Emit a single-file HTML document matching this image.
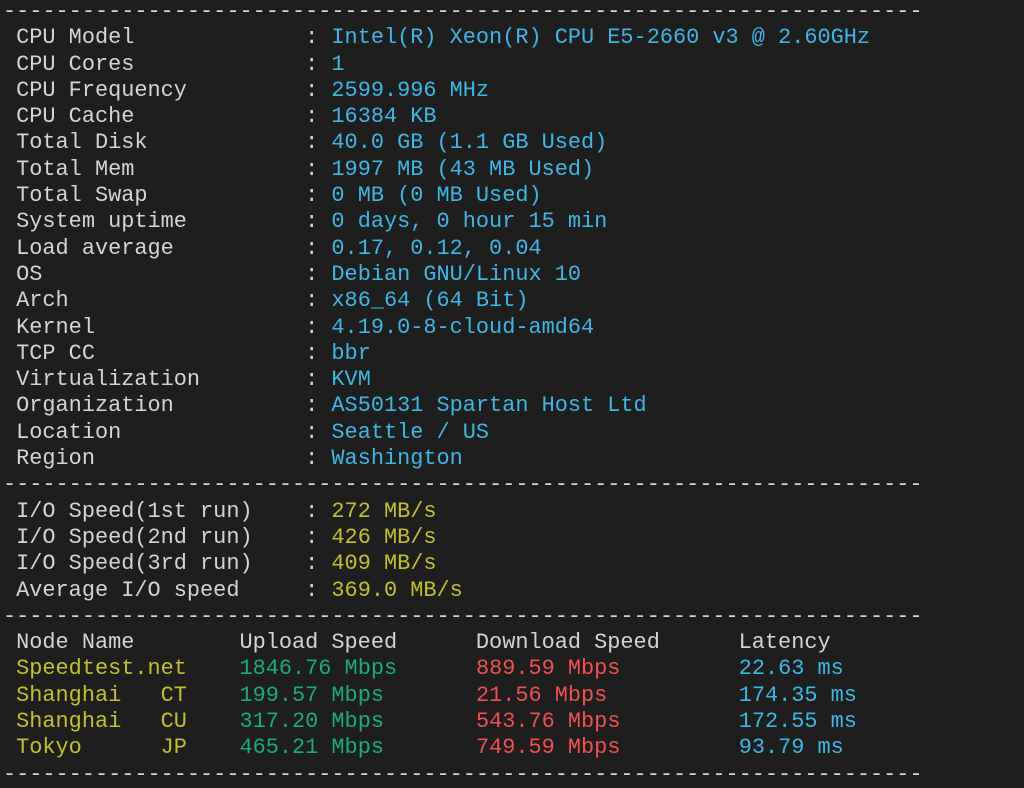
<!DOCTYPE html>
<html><head><meta charset="utf-8"><style>
html,body{margin:0;padding:0;background:#1e1e1e;width:1024px;height:787px;overflow:hidden}
pre{margin:0;position:absolute;left:3px;top:-1px;font-family:"Liberation Mono",monospace;font-size:21.9px;line-height:26.3px;color:#d4d4d4;white-space:pre}
.c{color:#3cb8e6}.y{color:#c2c222}.g{color:#17ae78}.r{color:#f15050}
</style></head><body><pre>----------------------------------------------------------------------
 CPU Model             : <span class="c">Intel(R) Xeon(R) CPU E5-2660 v3 @ 2.60GHz</span>
 CPU Cores             : <span class="c">1</span>
 CPU Frequency         : <span class="c">2599.996 MHz</span>
 CPU Cache             : <span class="c">16384 KB</span>
 Total Disk            : <span class="c">40.0 GB (1.1 GB Used)</span>
 Total Mem             : <span class="c">1997 MB (43 MB Used)</span>
 Total Swap            : <span class="c">0 MB (0 MB Used)</span>
 System uptime         : <span class="c">0 days, 0 hour 15 min</span>
 Load average          : <span class="c">0.17, 0.12, 0.04</span>
 OS                    : <span class="c">Debian GNU/Linux 10</span>
 Arch                  : <span class="c">x86_64 (64 Bit)</span>
 Kernel                : <span class="c">4.19.0-8-cloud-amd64</span>
 TCP CC                : <span class="c">bbr</span>
 Virtualization        : <span class="c">KVM</span>
 Organization          : <span class="c">AS50131 Spartan Host Ltd</span>
 Location              : <span class="c">Seattle / US</span>
 Region                : <span class="c">Washington</span>
----------------------------------------------------------------------
 I/O Speed(1st run)    : <span class="y">272 MB/s</span>
 I/O Speed(2nd run)    : <span class="y">426 MB/s</span>
 I/O Speed(3rd run)    : <span class="y">409 MB/s</span>
 Average I/O speed     : <span class="y">369.0 MB/s</span>
----------------------------------------------------------------------
 Node Name        Upload Speed      Download Speed      Latency
 <span class="y">Speedtest.net</span>    <span class="g">1846.76 Mbps</span>      <span class="r">889.59 Mbps</span>         <span class="c">22.63 ms</span>
 <span class="y">Shanghai   CT</span>    <span class="g">199.57 Mbps</span>       <span class="r">21.56 Mbps</span>          <span class="c">174.35 ms</span>
 <span class="y">Shanghai   CU</span>    <span class="g">317.20 Mbps</span>       <span class="r">543.76 Mbps</span>         <span class="c">172.55 ms</span>
 <span class="y">Tokyo      JP</span>    <span class="g">465.21 Mbps</span>       <span class="r">749.59 Mbps</span>         <span class="c">93.79 ms</span>
----------------------------------------------------------------------
</pre></body></html>
